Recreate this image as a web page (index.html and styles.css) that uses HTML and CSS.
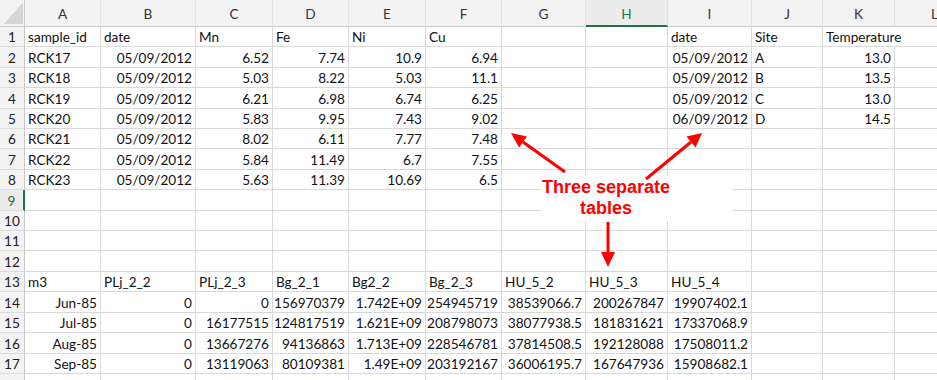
FILE: index.html
```html
<!DOCTYPE html>
<html>
<head>
<meta charset="utf-8">
<link rel="stylesheet" href="styles.css">
</head>
<body>
<div class="page">
<div class="sheet">
  <div class="corner"></div>
  <div class="ch">A</div><div class="ch">B</div><div class="ch">C</div><div class="ch">D</div><div class="ch">E</div><div class="ch">F</div><div class="ch">G</div><div class="ch sel">H</div><div class="ch">I</div><div class="ch">J</div><div class="ch">K</div><div class="ch">L</div>

  <div class="rh">1</div><div class="c">sample_id</div><div class="c">date</div><div class="c">Mn</div><div class="c">Fe</div><div class="c">Ni</div><div class="c">Cu</div><div class="c"></div><div class="c"></div><div class="c">date</div><div class="c">Site</div><div class="c spill">Temperature</div><div class="c"></div>

  <div class="rh">2</div><div class="c">RCK17</div><div class="c r">05/09/2012</div><div class="c r">6.52</div><div class="c r">7.74</div><div class="c r">10.9</div><div class="c r">6.94</div><div class="c"></div><div class="c"></div><div class="c r">05/09/2012</div><div class="c">A</div><div class="c r">13.0</div><div class="c"></div>

  <div class="rh">3</div><div class="c">RCK18</div><div class="c r">05/09/2012</div><div class="c r">5.03</div><div class="c r">8.22</div><div class="c r">5.03</div><div class="c r">11.1</div><div class="c"></div><div class="c"></div><div class="c r">05/09/2012</div><div class="c">B</div><div class="c r">13.5</div><div class="c"></div>

  <div class="rh">4</div><div class="c">RCK19</div><div class="c r">05/09/2012</div><div class="c r">6.21</div><div class="c r">6.98</div><div class="c r">6.74</div><div class="c r">6.25</div><div class="c"></div><div class="c"></div><div class="c r">05/09/2012</div><div class="c">C</div><div class="c r">13.0</div><div class="c"></div>

  <div class="rh">5</div><div class="c">RCK20</div><div class="c r">05/09/2012</div><div class="c r">5.83</div><div class="c r">9.95</div><div class="c r">7.43</div><div class="c r">9.02</div><div class="c"></div><div class="c"></div><div class="c r">06/09/2012</div><div class="c">D</div><div class="c r">14.5</div><div class="c"></div>

  <div class="rh">6</div><div class="c">RCK21</div><div class="c r">05/09/2012</div><div class="c r">8.02</div><div class="c r">6.11</div><div class="c r">7.77</div><div class="c r">7.48</div><div class="c"></div><div class="c"></div><div class="c"></div><div class="c"></div><div class="c"></div><div class="c"></div>

  <div class="rh">7</div><div class="c">RCK22</div><div class="c r">05/09/2012</div><div class="c r">5.84</div><div class="c r">11.49</div><div class="c r">6.7</div><div class="c r">7.55</div><div class="c"></div><div class="c"></div><div class="c"></div><div class="c"></div><div class="c"></div><div class="c"></div>

  <div class="rh">8</div><div class="c">RCK23</div><div class="c r">05/09/2012</div><div class="c r">5.63</div><div class="c r">11.39</div><div class="c r">10.69</div><div class="c r">6.5</div><div class="c"></div><div class="c"></div><div class="c"></div><div class="c"></div><div class="c"></div><div class="c"></div>

  <div class="rh sel">9</div><div class="c"></div><div class="c"></div><div class="c"></div><div class="c"></div><div class="c"></div><div class="c"></div><div class="c"></div><div class="c"></div><div class="c"></div><div class="c"></div><div class="c"></div><div class="c"></div>

  <div class="rh">10</div><div class="c"></div><div class="c"></div><div class="c"></div><div class="c"></div><div class="c"></div><div class="c"></div><div class="c"></div><div class="c"></div><div class="c"></div><div class="c"></div><div class="c"></div><div class="c"></div>

  <div class="rh">11</div><div class="c"></div><div class="c"></div><div class="c"></div><div class="c"></div><div class="c"></div><div class="c"></div><div class="c"></div><div class="c"></div><div class="c"></div><div class="c"></div><div class="c"></div><div class="c"></div>

  <div class="rh">12</div><div class="c"></div><div class="c"></div><div class="c"></div><div class="c"></div><div class="c"></div><div class="c"></div><div class="c"></div><div class="c"></div><div class="c"></div><div class="c"></div><div class="c"></div><div class="c"></div>

  <div class="rh">13</div><div class="c">m3</div><div class="c">PLj_2_2</div><div class="c">PLj_2_3</div><div class="c">Bg_2_1</div><div class="c">Bg2_2</div><div class="c">Bg_2_3</div><div class="c">HU_5_2</div><div class="c">HU_5_3</div><div class="c">HU_5_4</div><div class="c"></div><div class="c"></div><div class="c"></div>

  <div class="rh">14</div><div class="c r">Jun-85</div><div class="c r">0</div><div class="c r">0</div><div class="c r">156970379</div><div class="c r">1.742E+09</div><div class="c r">254945719</div><div class="c r">38539066.7</div><div class="c r">200267847</div><div class="c r">19907402.1</div><div class="c"></div><div class="c"></div><div class="c"></div>

  <div class="rh">15</div><div class="c r">Jul-85</div><div class="c r">0</div><div class="c r">16177515</div><div class="c r">124817519</div><div class="c r">1.621E+09</div><div class="c r">208798073</div><div class="c r">38077938.5</div><div class="c r">181831621</div><div class="c r">17337068.9</div><div class="c"></div><div class="c"></div><div class="c"></div>

  <div class="rh">16</div><div class="c r">Aug-85</div><div class="c r">0</div><div class="c r">13667276</div><div class="c r">94136863</div><div class="c r">1.713E+09</div><div class="c r">228546781</div><div class="c r">37814508.5</div><div class="c r">192128088</div><div class="c r">17508011.2</div><div class="c"></div><div class="c"></div><div class="c"></div>

  <div class="rh">17</div><div class="c r">Sep-85</div><div class="c r">0</div><div class="c r">13119063</div><div class="c r">80109381</div><div class="c r">1.49E+09</div><div class="c r">203192167</div><div class="c r">36006195.7</div><div class="c r">167647936</div><div class="c r">15908682.1</div><div class="c"></div><div class="c"></div><div class="c"></div>

  <div class="rh"></div><div class="c"></div><div class="c"></div><div class="c"></div><div class="c"></div><div class="c"></div><div class="c"></div><div class="c"></div><div class="c"></div><div class="c"></div><div class="c"></div><div class="c"></div><div class="c"></div>
</div>

<div class="note"><div class="note-text">Three separate<br>tables</div></div>

<svg class="arrows" width="937" height="380" viewBox="0 0 937 380">
  <g stroke="#ff0000" stroke-width="3" fill="none">
    <line x1="565" y1="172" x2="523" y2="142"/>
    <line x1="646" y1="179" x2="691" y2="142"/>
    <line x1="608" y1="222" x2="608" y2="254"/>
  </g>
  <g fill="#ff0000">
    <polygon points="511,133 527,136.5 519,147.5"/>
    <polygon points="702,133 695.5,147.5 686.5,136.5"/>
    <polygon points="601,252 615,252 608,267"/>
  </g>
</svg>
</div>
</body>
</html>
```
FILE: styles.css
```css
html, body {
  margin: 0;
  padding: 0;
  background: #ffffff;
  overflow: hidden;
}

.page {
  position: relative;
  width: 937px;
  height: 380px;
  overflow: hidden;
}

.sheet {
  display: grid;
  grid-template-columns: 25px 76px 95px 77px 76px 77px 76px 84px 82px 84px 71px 72px 80px;
  grid-template-rows: 27px;
  grid-auto-rows: 20.41px;
  width: 975px;
  font-family: Lato, "Open Sans", sans-serif;
  font-size: 13.6px;
  color: #111111;
}

.corner {
  box-sizing: border-box;
  background-color: #f3f3f3;
  background-image: linear-gradient(to bottom right, transparent 50%, #d6d6d6 50%);
  background-size: 19px 22px;
  background-position: right 1px bottom 2px;
  background-repeat: no-repeat;
  border-right: 1px solid #c9c9c9;
  border-bottom: 1px solid #c9c9c9;
}

.ch {
  box-sizing: border-box;
  display: flex;
  align-items: center;
  justify-content: center;
  padding-top: 2px;
  background: #f3f3f3;
  border-right: 1px solid #e2e2e2;
  border-bottom: 1px solid #c9c9c9;
  color: #333333;
  line-height: 16px;
}

.ch.sel {
  color: #217346;
  background: #ececec;
  border-bottom: 2px solid #217346;
  padding-top: 3px;
}

.rh {
  box-sizing: border-box;
  display: flex;
  align-items: flex-end;
  justify-content: center;
  padding-bottom: 1px;
  background: #f3f3f3;
  border-right: 1px solid #c9c9c9;
  border-bottom: 1px solid #dcdcdc;
  color: #222222;
  line-height: 16px;
}

.rh.sel {
  color: #217346;
  background: #ececec;
  border-right: 2px solid #217346;
}

.c {
  box-sizing: border-box;
  display: flex;
  align-items: flex-end;
  justify-content: flex-start;
  padding: 0 3px 1px 3px;
  border-right: 1px solid #d9d9d9;
  border-bottom: 1px solid #d9d9d9;
  white-space: nowrap;
  overflow: hidden;
  line-height: 16px;
  background: #ffffff;
}

.c.r {
  justify-content: flex-end;
}

.c.spill {
  overflow: visible;
  border-right-color: transparent;
  position: relative;
  z-index: 1;
}

.note {
  position: absolute;
  left: 541px;
  top: 176px;
  width: 192px;
  height: 45px;
  background: #ffffff;
}

.note-text {
  width: 130px;
  padding-top: 1px;
  text-align: center;
  font-family: "Liberation Sans", Arial, sans-serif;
  font-weight: bold;
  font-size: 18px;
  line-height: 21px;
  color: #ff0000;
}

.arrows {
  position: absolute;
  left: 0;
  top: 0;
  pointer-events: none;
}
```
